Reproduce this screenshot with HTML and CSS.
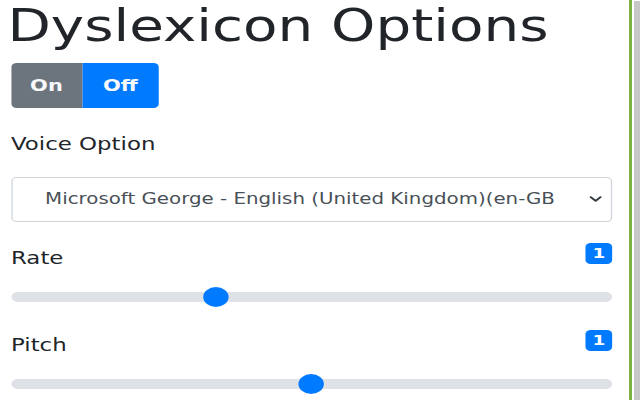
FILE: index.html
```html
<!DOCTYPE html>
<html lang="en">
<head>
<meta charset="utf-8">
<title>Dyslexicon Options</title>
<link rel="stylesheet" href="styles.css">
</head>
<body>
<div class="frame">
  <main class="viewport">
    <div class="page">
      <h1 class="title">Dyslexicon Options</h1>
      <div class="toggle">
        <button class="toggle-btn toggle-on" type="button">On</button>
        <button class="toggle-btn toggle-off" type="button">Off</button>
      </div>

      <label class="field-label">Voice Option</label>
      <div class="select">
        <span class="select-text">Microsoft George - English (United Kingdom)(en-GB</span>
        <svg class="chevron" width="10" height="6" viewBox="0 0 10 6" aria-hidden="true">
          <path d="M1.2 1.2 L5 4.8 L8.8 1.2" fill="none" stroke="#343a40" stroke-width="1.8" stroke-linecap="round" stroke-linejoin="round"/>
        </svg>
      </div>

      <div class="field-row field-row-rate">
        <span class="field-label">Rate</span>
        <span class="badge">1</span>
      </div>
      <input class="slider" type="range" min="0" max="3" step="0.1" value="1">

      <div class="field-row field-row-pitch">
        <span class="field-label">Pitch</span>
        <span class="badge">1</span>
      </div>
      <input class="slider" type="range" min="0" max="2" step="0.1" value="1">
    </div>
  </main>
  <div class="edge-green"></div>
  <div class="edge-gap"></div>
  <div class="edge-gray"></div>
</div>
</body>
</html>
```

FILE: styles.css
```css
html, body {
  margin: 0;
  padding: 0;
  background: #ffffff;
  overflow: hidden;
}

body {
  font-family: "DejaVu Sans", Verdana, sans-serif;
  color: #212529;
}

.frame {
  display: flex;
  width: 640px;
  height: 400px;
}

.viewport {
  flex: none;
  width: 629px;
  height: 400px;
  overflow: hidden;
}

.page {
  width: 495.3px;
  box-sizing: border-box;
  padding-left: 8.66px;
  transform: scaleX(1.27);
  transform-origin: 0 0;
}

.title {
  margin: 2px 0 13px -2.8px;
  font-size: 44.4px;
  line-height: 48px;
  font-weight: 400;
  color: #212529;
  white-space: nowrap;
}

.toggle {
  display: flex;
  height: 45px;
  margin-bottom: 21.3px;
}

.toggle-btn {
  display: flex;
  align-items: center;
  justify-content: center;
  height: 45px;
  margin: 0;
  padding: 0 0 1px 0;
  border: 0;
  font-family: "DejaVu Sans", Verdana, sans-serif;
  font-size: 16.5px;
  font-weight: 700;
  color: #f8f9fa;
}

.toggle-on {
  width: 55.9px;
  background: #6c757d;
  border-radius: 4px 0 0 4px;
}

.toggle-off {
  width: 60.6px;
  background: #007bff;
  border-radius: 0 4px 4px 0;
}

.field-label {
  display: block;
  font-size: 18px;
  line-height: 29px;
  color: #212529;
}

.select {
  display: flex;
  align-items: center;
  box-sizing: border-box;
  width: 473.2px;
  height: 45px;
  margin-top: 18.7px;
  border: 1px solid #ced4da;
  border-radius: 4px;
  background: #ffffff;
}

.select-text {
  flex: 1;
  text-align: center;
  font-size: 15.6px;
  color: #495057;
  white-space: nowrap;
}

.chevron {
  flex: none;
  display: block;
  margin: 0 7px 0 1px;
}

.field-row {
  display: flex;
  justify-content: space-between;
  align-items: flex-start;
  width: 473.2px;
  height: 29px;
}

.field-row-rate {
  margin-top: 20.8px;
}

.field-row-pitch {
  margin-top: 21.8px;
}

.badge {
  display: flex;
  align-items: center;
  justify-content: center;
  width: 20.5px;
  height: 21px;
  border-radius: 4px;
  background: #007bff;
  color: #ffffff;
  font-size: 14.5px;
  font-weight: 700;
  line-height: 1;
}

.slider {
  -webkit-appearance: none;
  appearance: none;
  display: block;
  width: 473.2px;
  height: 22px;
  margin: 14.2px 0 0 0;
  padding: 0;
  background: transparent;
}

.slider::-webkit-slider-runnable-track {
  height: 10px;
  background: #dee2e6;
  border-radius: 5px;
  border: 0;
}

.slider::-webkit-slider-thumb {
  -webkit-appearance: none;
  appearance: none;
  width: 20px;
  height: 20px;
  margin-top: -5px;
  border: 0;
  border-radius: 50%;
  background: #007bff;
}

.edge-green {
  flex: none;
  width: 3px;
  background: #7cb342;
}

.edge-gap {
  flex: none;
  width: 2px;
  background: #ffffff;
}

.edge-gray {
  flex: 1;
  margin-top: 1px;
  background: #c8c8c8;
}
```
